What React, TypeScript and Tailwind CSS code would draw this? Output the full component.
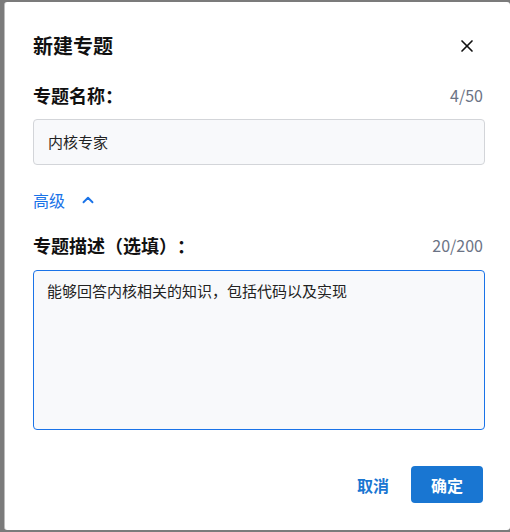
import { ChevronUp, X } from "lucide-react"

export default function App() {
  return (
    <div className="w-[510px] h-[532px] bg-[#7b7b7b] pt-[2px] pb-[2px] pl-[4px] overflow-hidden font-['Noto_Sans_CJK_SC','Noto_Sans',sans-serif] [text-spacing-trim:space-all]">
      <div className="h-full bg-white border-l border-[#bdbdbd] rounded-[3px] pl-[28px] pr-[25px] pt-[30px]">
        <div className="flex items-center justify-between h-[28px]">
          <h2 className="text-[20px] leading-[28px] font-bold text-[#111]">新建专题</h2>
          <X className="w-[20px] h-[20px] text-[#111] mr-[8px]" strokeWidth={2} />
        </div>

        <div className="mt-[22px] flex items-center justify-between h-[26px] pr-[2px]">
          <span className="text-[18px] font-bold text-[#111]">专题名称：</span>
          <span className="text-[16px] text-[#6b7385]">4/50</span>
        </div>
        <div className="mt-[11px] h-[46px] rounded-[4px] border border-[#d3d5d9] bg-[#f8f9fb] flex items-center px-[14px] text-[15px] text-[#222]">
          内核专家
        </div>

        <div className="mt-[23px] flex items-center gap-[14px] h-[24px] text-[#1a73e8]">
          <span className="text-[16px]">高级</span>
          <ChevronUp className="w-[18px] h-[18px]" strokeWidth={2.5} />
        </div>

        <div className="mt-[20px] flex items-center justify-between h-[26px] pr-[2px]">
          <span className="text-[18px] font-bold text-[#111]">专题描述（选填）：</span>
          <span className="text-[16px] text-[#6b7385]">20/200</span>
        </div>
        <div className="mt-[12px] h-[160px] rounded-[4px] border border-[#1a73e8] bg-[#f8f9fb] px-[13px] pt-[9px] text-[15px] leading-[22px] text-[#222]">
          能够回答内核相关的知识，包括代码以及实现
        </div>

        <div className="mt-[36px] flex items-center justify-end gap-[20px] pr-[2px]">
          <button className="text-[16px] font-bold text-[#1976d2] px-[2px]">取消</button>
          <button className="w-[72px] h-[37px] rounded-[4px] bg-[#1976d2] text-white text-[16px] font-bold">确定</button>
        </div>
      </div>
    </div>
  )
}
